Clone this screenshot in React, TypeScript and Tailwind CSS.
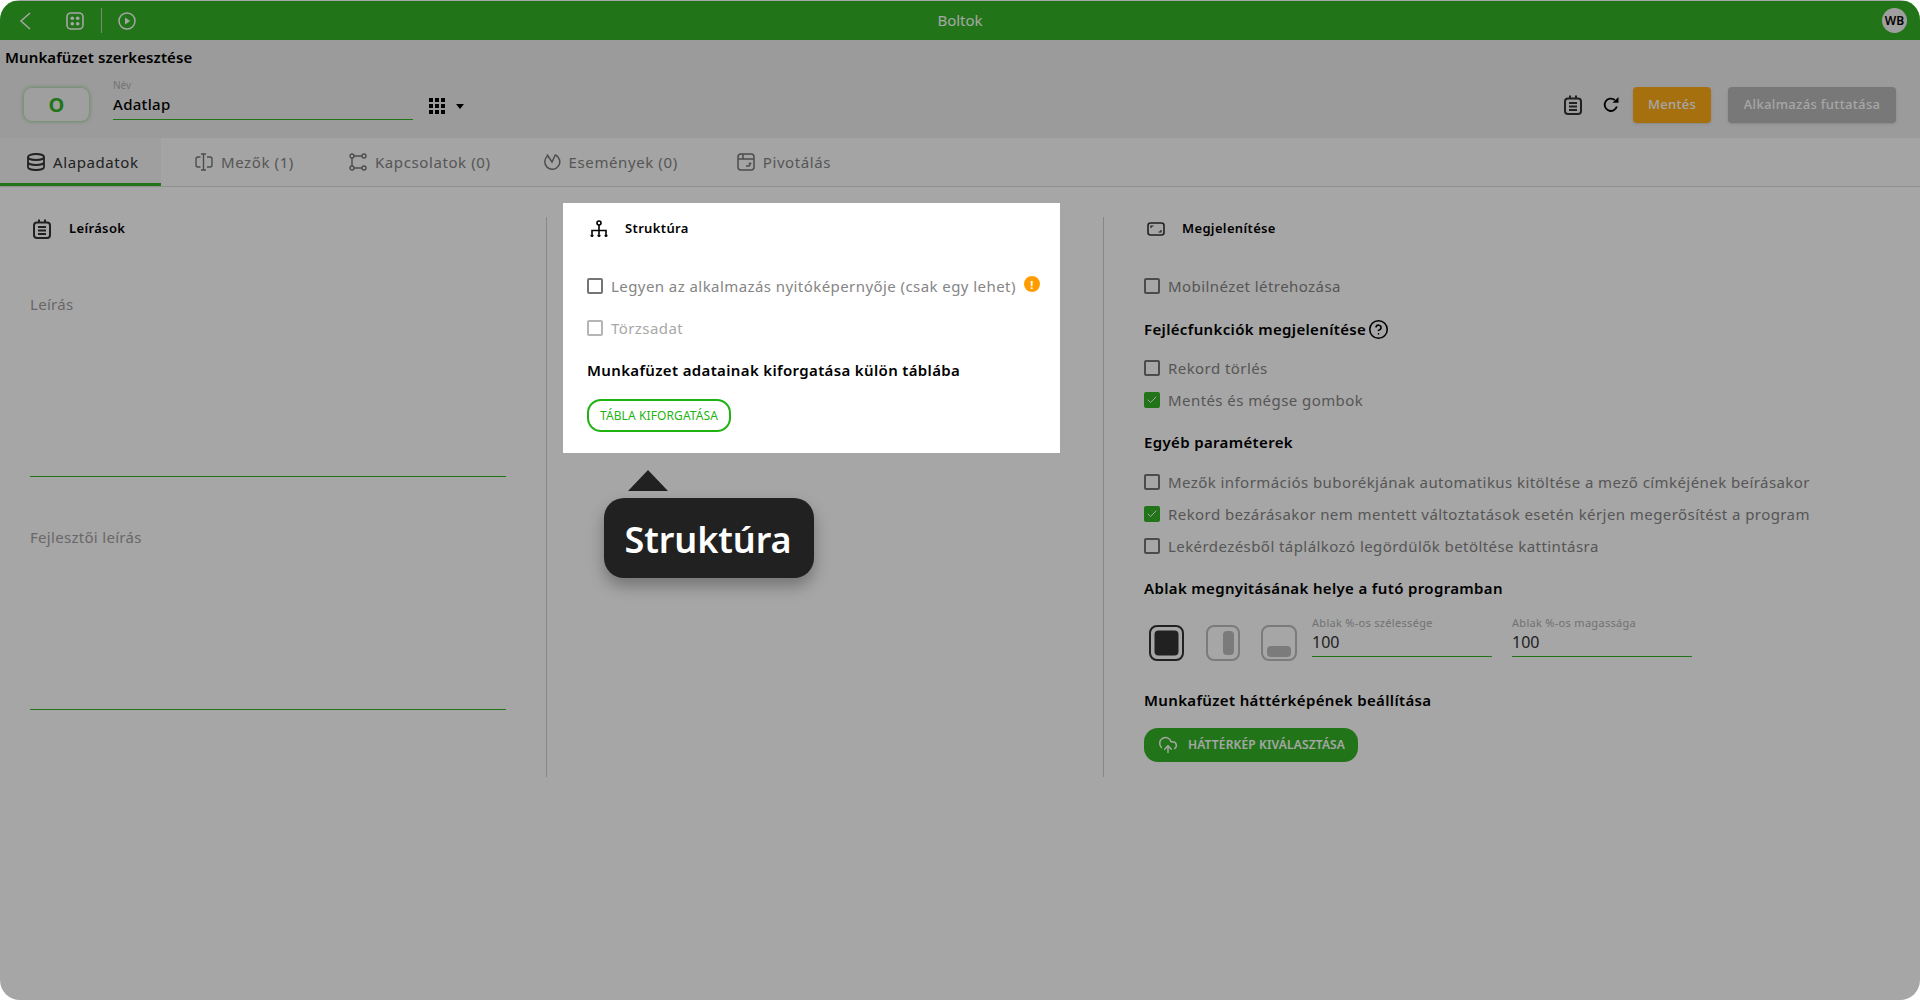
import React from "react";
import { CircleHelp, CloudUpload, Check } from "lucide-react";

const font = "[font-family:'Noto_Sans',sans-serif]";

function NotesIcon({ className = "" }: { className?: string }) {
  return (
    <svg viewBox="0 0 18 20" className={className} fill="none" stroke="currentColor" strokeWidth="2">
      <rect x="1" y="3.500" width="16" height="15.500" rx="3" />
      <path d="M6 0.500v3M12 0.500v3M5 8h8M5 11.500h8M5 15h8" />
    </svg>
  );
}

function DbIcon({ className = "" }: { className?: string }) {
  return (
    <svg viewBox="0 0 18 18" className={className} fill="none" stroke="currentColor" strokeWidth="1.800">
      <ellipse cx="9" cy="4" rx="8" ry="3" />
      <path d="M1 4v10c0 1.700 3.600 3 8 3s8-1.300 8-3V4M1 9c0 1.700 3.600 3 8 3s8-1.300 8-3" />
    </svg>
  );
}

function FieldsIcon({ className = "" }: { className?: string }) {
  return (
    <svg viewBox="0 0 18 18" className={className} fill="none" stroke="currentColor" strokeWidth="1.400">
      <path d="M5.500 4H3a2 2 0 0 0-2 2v6a2 2 0 0 0 2 2h2.500M12 4h3a2 2 0 0 1 2 2v6a2 2 0 0 1-2 2h-3M8.500 1v16M6 1h5M6 17h5" />
    </svg>
  );
}

function LinksIcon({ className = "" }: { className?: string }) {
  return (
    <svg viewBox="0 0 18 18" className={className} fill="none" stroke="currentColor" strokeWidth="1.400">
      <circle cx="3" cy="3" r="2" />
      <circle cx="15" cy="3" r="2" />
      <circle cx="3" cy="15" r="2" />
      <circle cx="15" cy="15" r="2" />
      <path d="M5 3h8M3 5v8M5 15h8" />
    </svg>
  );
}

function EventsIcon({ className = "" }: { className?: string }) {
  return (
    <svg viewBox="0 0 18 18" className={className} fill="none" stroke="currentColor" strokeWidth="1.500">
      <path d="M4.500 3a7.500 7.500 0 1 0 8-1" />
      <path d="M4 1.500L9 9l3.500-7.500" />
    </svg>
  );
}

function PivotIcon({ className = "" }: { className?: string }) {
  return (
    <svg viewBox="0 0 18 18" className={className} fill="none" stroke="currentColor" strokeWidth="1.500">
      <rect x="1" y="1" width="16" height="16" rx="3" />
      <path d="M1 6h16M6 1v5M9 13h2.500a1.500 1.500 0 0 0 1.500-1.500V10" />
      <path d="M11.500 11l1.500-1.500 1.500 1.500" strokeWidth="1" />
    </svg>
  );
}

function StructureIcon({ className = "" }: { className?: string }) {
  return (
    <svg viewBox="0 0 18 18" className={className} fill="none" stroke="currentColor" strokeWidth="1.600">
      <circle cx="9" cy="3" r="2" />
      <path d="M9 5v9M2 14v-3.500h14V14" />
      <circle cx="2" cy="15.500" r="1.500" fill="currentColor" stroke="none" />
      <circle cx="9" cy="15.500" r="1.500" fill="currentColor" stroke="none" />
      <circle cx="16" cy="15.500" r="1.500" fill="currentColor" stroke="none" />
    </svg>
  );
}

function DisplayIcon({ className = "" }: { className?: string }) {
  return (
    <svg viewBox="0 0 18 14" className={className} fill="none" stroke="currentColor" strokeWidth="1.600">
      <rect x="1" y="1" width="16" height="12" rx="2.500" />
      <path d="M4 6V4h2.500M14 8v2h-2.500" strokeWidth="1.200" />
    </svg>
  );
}

function GridIcon({ className = "" }: { className?: string }) {
  return (
    <svg viewBox="0 0 16 16" className={className} fill="currentColor">
      {[0, 6, 12].map((x) =>
        [0, 6, 12].map((y) => <rect key={`${x}-${y}`} x={x} y={y} width="4" height="4" />)
      )}
    </svg>
  );
}

function RefreshIcon({ className = "" }: { className?: string }) {
  return (
    <svg viewBox="0 0 16 16" className={className} fill="none" stroke="currentColor" strokeWidth="1.800">
      <path d="M13.800 9.500A6.200 6.200 0 1 1 11.800 3" />
      <path d="M9.500 5.800H15.500V0z" fill="currentColor" stroke="none" />
    </svg>
  );
}

function BackIcon() {
  return (
    <svg viewBox="0 0 12 18" className="ml-[19px] h-[18px] w-3" fill="none" stroke="currentColor" strokeWidth="1.500">
      <path d="M11 1L2 9l9 8" />
    </svg>
  );
}

function DotsIcon() {
  return (
    <svg viewBox="0 0 18 18" className="ml-[35px] h-[18px] w-[18px]" fill="none" stroke="currentColor" strokeWidth="1.600">
      <rect x="1" y="1" width="16" height="16" rx="4" />
      <g fill="currentColor" stroke="none">
        <circle cx="6.300" cy="6.300" r="1.800" />
        <circle cx="11.700" cy="6.300" r="1.800" />
        <circle cx="6.300" cy="11.700" r="1.800" />
        <circle cx="11.700" cy="11.700" r="1.800" />
      </g>
    </svg>
  );
}

function PlayIcon() {
  return (
    <svg viewBox="0 0 18 18" className="ml-4 h-[18px] w-[18px]" fill="none" stroke="currentColor" strokeWidth="1.500">
      <circle cx="9" cy="9" r="8" />
      <path d="M7 5.500L12.200 9 7 12.500z" fill="currentColor" stroke="none" />
    </svg>
  );
}

function CheckRow({
  label,
  checked,
  faded,
  className = "",
}: {
  label: string;
  checked?: boolean;
  faded?: boolean;
  className?: string;
}) {
  return (
    <div className={`flex h-6 items-center gap-2 ${className}`}>
      {checked ? (
        <span className="flex h-4 w-4 items-center justify-center rounded-[2px] bg-[#33b426] text-white">
          <Check className="h-3 w-3" strokeWidth={2} />
        </span>
      ) : (
        <span
          className={`h-4 w-4 rounded-[2px] border-2 ${faded ? "border-[#b5b5b5]" : "border-[#757575]"}`}
        />
      )}
      <span
        className={`whitespace-nowrap text-[15px] tracking-[0.43px] ${faded ? "text-[#a8a8a8]" : "text-[#858585]"}`}
      >
        {label}
      </span>
    </div>
  );
}

function SectionHead({
  title,
  icon,
  className = "",
}: {
  title: string;
  icon: React.ReactNode;
  className?: string;
}) {
  return (
    <div className={`flex h-[22px] items-center pt-px text-black ${className}`}>
      {icon}
      <span className="text-[13px] font-semibold tracking-[0.35px]">{title}</span>
    </div>
  );
}

function SubHead({ children, className = "" }: { children: React.ReactNode; className?: string }) {
  return (
    <div className={`flex h-5 items-center whitespace-nowrap text-[15px] font-semibold tracking-[0.35px] text-black ${className}`}>
      {children}
    </div>
  );
}

function PercentInput({ label }: { label: string }) {
  return (
    <div className="h-10 w-[180px] border-b border-[#33b426]">
      <div className="h-3 text-[11px] leading-3 tracking-[0.3px] text-[#b0b0b0]">{label}</div>
      <div className="mt-0.5 h-[22px] text-[16px] leading-[22px] text-[#333]">100</div>
    </div>
  );
}

const tabs = [
  { label: "Mezők (1)", icon: <FieldsIcon className="h-[18px] w-[18px]" />, cls: "pl-[34px]" },
  { label: "Kapcsolatok (0)", icon: <LinksIcon className="h-[18px] w-[18px]" />, cls: "pl-[55px]" },
  { label: "Események (0)", icon: <EventsIcon className="h-[18px] w-[18px]" />, cls: "pl-[52px]" },
  { label: "Pivotálás", icon: <PivotIcon className="h-[18px] w-[18px]" />, cls: "pl-[59px]" },
];

export default function App() {
  return (
    <div className={`relative h-screen overflow-hidden rounded-[20px] bg-white pt-px ${font}`}>
      <header className="relative flex h-[39px] items-center bg-[#33b426] text-white">
        <BackIcon />
        <DotsIcon />
        <span className="ml-[17px] h-[25px] w-px bg-white/60" />
        <PlayIcon />
        <span className="absolute left-1/2 -translate-x-1/2 text-[15px]">Boltok</span>
        <span className="absolute right-[13px] flex h-[25px] w-[25px] items-center justify-center rounded-full bg-[#f5f5f5] text-[12px] font-semibold text-black">
          WB
        </span>
      </header>

      <section className="h-[98px] bg-[#eeeeee]">
        <div className="pl-[5px] pt-2 text-[15px] font-semibold leading-[18px] tracking-[0.1px] text-black">
          Munkafüzet szerkesztése
        </div>
        <div className="flex items-start pl-6 pt-[2px]">
          <div className="mt-[20px] flex h-[33px] w-[65px] items-center justify-center rounded-lg bg-[#f5f5f5] text-[20px] font-bold text-[#33b426] shadow-[0_0_4px_#33b42699]">
            O
          </div>
          <div className="ml-[24px] mt-[10px] h-[42px] w-[300px] border-b border-[#33b426]">
            <div className="h-[14px] text-[10px] leading-[14px] text-[#b0b0b0]">Név</div>
            <div className="h-[24px] text-[15px] font-medium leading-[24px] tracking-[0.3px] text-black">Adatlap</div>
          </div>
          <GridIcon className="ml-[16px] mt-[30px] h-4 w-4 text-black" />
          <span className="ml-[11px] mt-[36px] h-0 w-0 border-x-[4.5px] border-t-[5px] border-x-transparent border-t-black" />
          <div className="ml-auto flex items-center pr-6 pt-[19px]">
            <NotesIcon className="h-5 w-[18px] text-[#333]" />
            <RefreshIcon className="ml-[21px] h-4 w-4 text-black" />
            <button className="ml-[14px] h-9 w-[78px] rounded bg-[#ffad18] text-[13px] font-medium tracking-[0.3px] text-white shadow-sm">
              Mentés
            </button>
            <button className="ml-[17px] h-9 w-[168px] rounded bg-[#b8b8b8] text-[13px] font-medium tracking-[0.35px] text-white shadow-sm">
              Alkalmazás futtatása
            </button>
          </div>
        </div>
      </section>

      <nav className="flex h-[49px] border-b border-[#dcdcdc] bg-[#fcfcfc] text-[15px] tracking-[0.6px]">
        <div className="flex h-[48px] w-[161px] items-center gap-2 border-b-[3px] border-[#33b426] bg-[#f5f5f5] pl-[27px] pt-[3px] text-[#333]">
          <DbIcon className="h-[18px] w-[18px]" />
          Alapadatok
        </div>
        {tabs.map((t) => (
          <div key={t.label} className={`flex items-center gap-2 text-[#858585] ${t.cls}`}>
            <span className="text-[#757575]">{t.icon}</span>
            {t.label}
          </div>
        ))}
      </nav>

      <main className="flex pt-[30px]">
        <div className="h-[560px] w-[547px] shrink-0 border-r border-[#d0d0d0]">
          <SectionHead
            title="Leírások"
            className="pl-[33px]"
            icon={<NotesIcon className="mr-[18px] h-5 w-[18px] text-[#333]" />}
          />
          <div className="ml-[30px] mt-[55px] h-5 w-[476px] text-[15px] leading-5 tracking-[0.3px] text-[#a0a0a0]">Leírás</div>
          <div className="ml-[30px] h-[163px] w-[476px] border-b border-[#33b426]" />
          <div className="ml-[30px] mt-[50px] h-5 w-[476px] text-[15px] leading-5 tracking-[0.3px] text-[#a0a0a0]">Fejlesztői leírás</div>
          <div className="ml-[30px] h-[163px] w-[476px] border-b border-[#33b426]" />
        </div>

        <div className="h-[560px] w-[557px] shrink-0 border-r border-[#d0d0d0]">
          <div className="relative z-10 ml-4 -mt-[14px] h-[250px] w-[497px] bg-white pl-6 pt-[14px] shadow-[0_0_0_3000px_rgba(0,0,0,0.35)]">
            <SectionHead
              title="Struktúra"
              icon={<StructureIcon className="ml-[3px] mr-[17px] h-[18px] w-[18px]" />}
            />
            <div className="mt-[35px] flex items-start">
              <CheckRow label="Legyen az alkalmazás nyitóképernyője (csak egy lehet)" />
              <span className="ml-[8px] mt-[2px] flex h-4 w-4 items-center justify-center rounded-full bg-[#ff9d00] text-[11px] font-bold leading-none text-white">
                !
              </span>
            </div>
            <CheckRow label="Törzsadat" faded className="mt-[18px]" />
            <SubHead className="mt-5">Munkafüzet adatainak kiforgatása külön táblába</SubHead>
            <button className="mt-[19px] h-[33px] w-[144px] rounded-[14px] border-2 border-[#1fb312] text-[12px] uppercase tracking-[0.1px] text-[#1fb312]">
              Tábla kiforgatása
            </button>

            <span className="absolute left-[65px] top-[267px] h-0 w-0 border-x-[20px] border-b-[21px] border-x-transparent border-b-[#212121]" />
            <div className="absolute left-[41px] top-[295px] flex h-[80px] w-[210px] items-center justify-center rounded-[20px] bg-[#212121] pr-[2px] pt-[3px] text-[36px] font-semibold tracking-[-0.1px] text-white shadow-[0_8px_16px_rgba(0,0,0,0.3)]">
              Struktúra
            </div>
          </div>
        </div>

        <div className="pl-[41px]">
          <SectionHead
            title="Megjelenítése"
            icon={<DisplayIcon className="ml-[2px] mr-[17px] h-[14px] w-[18px] text-[#333]" />}
          />
          <div className="-ml-px">
            <CheckRow label="Mobilnézet létrehozása" className="mt-[35px]" />
          </div>
          <SubHead className="-ml-px mt-[21px]">
            Fejlécfunkciók megjelenítése
            <CircleHelp className="ml-[2px] h-[21px] w-[21px]" strokeWidth={1.8} />
          </SubHead>
          <div className="-ml-px">
            <CheckRow label="Rekord törlés" className="mt-[17px]" />
            <CheckRow label="Mentés és mégse gombok" checked className="mt-2" />
          </div>
          <SubHead className="-ml-px mt-5">Egyéb paraméterek</SubHead>
          <div className="-ml-px">
            <CheckRow label="Mezők információs buborékjának automatikus kitöltése a mező címkéjének beírásakor" className="mt-[18px]" />
            <CheckRow label="Rekord bezárásakor nem mentett változtatások esetén kérjen megerősítést a program" checked className="mt-2" />
            <CheckRow label="Lekérdezésből táplálkozó legördülők betöltése kattintásra" className="mt-2" />
          </div>
          <SubHead className="-ml-px mt-5">Ablak megnyitásának helye a futó programban</SubHead>
          <div className="mt-[19px] flex h-[44px] items-start">
            <svg viewBox="0 0 35 36" className="ml-1 mt-2 h-9 w-[35px]">
              <rect x="1" y="1" width="33" height="34" rx="7" fill="none" stroke="#333" strokeWidth="2" />
              <rect x="5.500" y="5.500" width="24" height="25" rx="4" fill="#333" />
            </svg>
            <svg viewBox="0 0 34 36" className="ml-[22px] mt-2 h-9 w-[34px]">
              <rect x="1" y="1" width="32" height="34" rx="7" fill="none" stroke="#bdbdbd" strokeWidth="2" />
              <rect x="17" y="6" width="11" height="24" rx="4" fill="#bdbdbd" />
            </svg>
            <svg viewBox="0 0 36 36" className="ml-[21px] mt-2 h-9 w-9">
              <rect x="1" y="1" width="34" height="34" rx="7" fill="none" stroke="#bdbdbd" strokeWidth="2" />
              <rect x="6" y="21" width="24" height="11" rx="4" fill="#bdbdbd" />
            </svg>
            <div className="ml-[15px]">
              <PercentInput label="Ablak %-os szélessége" />
            </div>
            <div className="ml-5">
              <PercentInput label="Ablak %-os magassága" />
            </div>
          </div>
          <SubHead className="-ml-px mt-[29px]">Munkafüzet háttérképének beállítása</SubHead>
          <button className="-ml-px mt-[18px] flex h-[34px] w-[214px] items-center rounded-[14px] bg-[#33b426] pl-[14px] text-[12px] font-semibold uppercase tracking-[0.15px] text-white">
            <CloudUpload className="mr-[10px] h-5 w-5" strokeWidth={1.8} />
            Háttérkép kiválasztása
          </button>
        </div>
      </main>
    </div>
  );
}
